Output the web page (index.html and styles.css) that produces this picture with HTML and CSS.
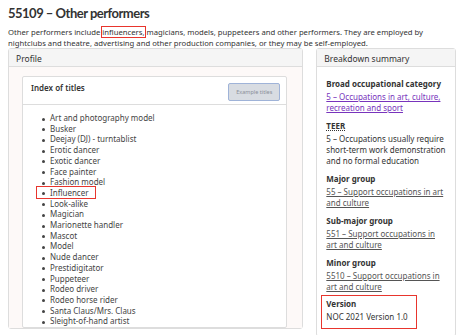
FILE: index.html
```html
<!DOCTYPE html>
<html lang="en">
<head>
    <meta charset="UTF-8">
    <title>55109 – Other performers</title>
    <link rel="stylesheet" href="styles.css">
</head>
<body>
    <h1>55109 – Other performers</h1>
    <p class="intro">Other performers include <span class="mark">influencers,</span> magicians, models, puppeteers and other performers. They are employed by nightclubs and theatre, advertising and other production companies, or they may be self-employed.</p>

    <div class="columns">
        <section class="panel profile">
            <div class="panel-heading">Profile</div>
            <div class="panel-body">
                <div class="box">
                    <div class="box-heading">
                        <span>Index of titles</span>
                        <button class="example-btn">Example titles</button>
                    </div>
                    <ul class="titles">
                        <li>Art and photography model</li>
                        <li>Busker</li>
                        <li>Deejay (DJ) - turntablist</li>
                        <li>Erotic dancer</li>
                        <li>Exotic dancer</li>
                        <li>Face painter</li>
                        <li>Fashion model</li>
                        <li><span class="mark item-mark">Influencer</span></li>
                        <li>Look-alike</li>
                        <li>Magician</li>
                        <li>Marionette handler</li>
                        <li>Mascot</li>
                        <li>Model</li>
                        <li>Nude dancer</li>
                        <li>Prestidigitator</li>
                        <li>Puppeteer</li>
                        <li>Rodeo driver</li>
                        <li>Rodeo horse rider</li>
                        <li>Santa Claus/Mrs. Claus</li>
                        <li>Sleight-of-hand artist</li>
                    </ul>
                </div>
            </div>
        </section>

        <section class="panel summary">
            <div class="panel-heading">Breakdown summary</div>
            <div class="panel-body">
                <dl>
                    <dt>Broad occupational category</dt>
                    <dd><a href="#" class="visited">5 – Occupations in art, culture, recreation and sport</a></dd>
                    <dt><abbr title="Training, Education, Experience and Responsibilities">TEER</abbr></dt>
                    <dd>5 – Occupations usually require short-term work demonstration and no formal education</dd>
                    <dt>Major group</dt>
                    <dd><a href="#">55 – Support occupations in art and culture</a></dd>
                    <dt>Sub-major group</dt>
                    <dd><a href="#">551 – Support occupations in art and culture</a></dd>
                    <dt>Minor group</dt>
                    <dd><a href="#">5510 – Support occupations in art and culture</a></dd>
                </dl>
                <dl class="version mark">
                    <dt>Version</dt>
                    <dd>NOC 2021 Version 1.0</dd>
                </dl>
            </div>
        </section>
    </div>
</body>
</html>
```

FILE: styles.css
```css
* {
    margin: 0;
    padding: 0;
    box-sizing: border-box;
}
body {
    font-family: 'Noto Sans', sans-serif;
    font-size: 8px;
    line-height: 11px;
    color: #333;
    background-color: #fff;
    padding: 0 8px;
    height: 335px;
    overflow: hidden;
}
h1 {
    font-family: 'Lato', sans-serif;
    font-size: 13px;
    letter-spacing: -0.5px;
    line-height: 20px;
    font-weight: bold;
    color: #333;
    padding-top: 3px;
}
.intro {
    font-size: 7.7px;
    margin-top: 4px;
}
.mark {
    outline: 1px solid #e8352d;
}
.columns {
    display: flex;
    align-items: flex-start;
    gap: 13px;
    margin-top: -1px;
}
.panel {
    border: 1px solid #ddd;
    border-radius: 3px;
}
.profile {
    width: 296px;
}
.summary {
    width: 140px;
}
.panel-heading {
    background-color: #f5f5f5;
    border-bottom: 1px solid #ddd;
    height: 18px;
    padding: 4px 7px;
    font-size: 8.5px;
}
.profile .panel-body {
    background-color: #fdf9f8;
    padding: 9px 15px 0 13px;
}
.box {
    background-color: #fff;
    border: 1px solid #ddd;
    border-radius: 2px;
}
.box-heading {
    display: flex;
    justify-content: space-between;
    align-items: flex-start;
    height: 28px;
    border-bottom: 1px solid #ddd;
    padding: 5px 6px 0 8px;
    font-weight: 600;
}
.example-btn {
    font-family: 'Noto Sans', sans-serif;
    font-size: 5.5px;
    color: #8a8f99;
    background-color: #d8dce2;
    border: 1px solid #9fb3d8;
    border-radius: 2px;
    width: 52px;
    height: 18px;
    margin-top: 1px;
}
.titles {
    list-style: none;
    padding: 8px 0 0 27px;
    line-height: 10.7px;
    color: #444;
}
.titles li::before {
    content: "";
    float: left;
    width: 3px;
    height: 3px;
    margin: 4.5px 5px 0 -8px;
    border-radius: 50%;
    background-color: #444;
}
.item-mark {
    padding: 0 6px 0 13px;
    margin-left: -13px;
}
.summary .panel-body {
    padding: 11px 9px 8px;
}
dt {
    font-weight: bold;
    margin-bottom: 2px;
}
dd {
    margin-bottom: 7px;
}
a {
    color: #555;
}
a.visited {
    color: #7834bc;
}
abbr {
    text-decoration: underline dotted;
}
.version {
    display: inline-block;
    padding: 2px 8px 6px 4px;
    margin-left: -4px;
    margin-top: -3px;
}
.version dd {
    margin-bottom: 0;
}
```
